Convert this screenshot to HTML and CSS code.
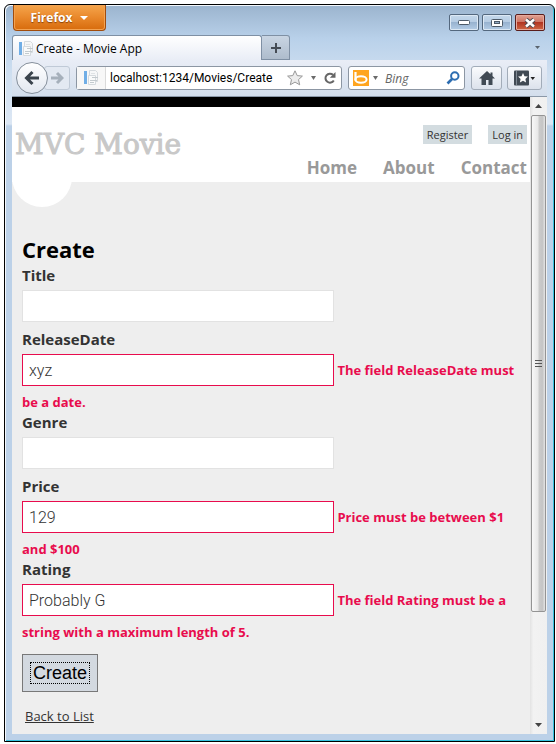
FILE: index.html
```html
<!DOCTYPE html>
<html lang="en">
<head>
<meta charset="utf-8">
<title>Create - Movie App</title>
<link rel="stylesheet" href="styles.css">
</head>
<body>
<svg class="defs" width="0" height="0" aria-hidden="true">
  <symbol id="doc" viewBox="0 0 16 16">
    <rect x="1" y="1" width="3" height="13" fill="#70aee6"/>
    <path d="M6.500 .5h6l2 2v9h-8z" fill="#f6f7f8" stroke="#d5dade"/>
    <path d="M5.500 5.500h7v9h-7z" fill="#f9fafa" stroke="#d5dade"/>
    <path d="M9 7.500h6M7 10.500h7M7 12.500h4" stroke="#c3cace"/>
    <path d="M8 3.500h4" stroke="#dfe3e5"/>
  </symbol>
</svg>
<div class="window">
  <header class="titlebar">
    <button class="app-menu" type="button">Firefox
      <svg width="8" height="4" viewBox="0 0 8 4" aria-hidden="true"><path d="M0 0h8L4 4z" fill="#fff"/></svg>
    </button>
    <div class="window-controls">
      <button class="control" type="button" aria-label="Minimize"><svg width="12" height="6" viewBox="0 0 12 6"><rect x=".5" y=".5" width="11" height="4" rx="1" fill="#fff" stroke="#4d5a68"/></svg></button>
      <button class="control" type="button" aria-label="Maximize"><svg width="12" height="8" viewBox="0 0 12 8"><rect x=".5" y=".5" width="11" height="7" rx="1" fill="#fff" stroke="#4d5a68"/><rect x="3.500" y="2.500" width="5" height="2" fill="#8fa9c4" stroke="#4d5a68"/></svg></button>
      <button class="control close" type="button" aria-label="Close"><svg width="12" height="10" viewBox="0 0 12 10"><path d="M2 1.500l8 7M10 1.500l-8 7" stroke="#4f4a52" stroke-width="4.500"/><path d="M2 1.500l8 7M10 1.500l-8 7" stroke="#fff" stroke-width="2.500"/></svg></button>
    </div>
  </header>
  <div class="chrome">
    <div class="tabs">
      <div class="tab"><svg width="16" height="16" aria-hidden="true"><use href="#doc"/></svg><span>Create - Movie App</span></div>
      <button class="new-tab" type="button" aria-label="New tab"><svg width="10" height="10" viewBox="0 0 10 10"><path d="M5 0v10M0 5h10" stroke="#454c55" stroke-width="2"/></svg></button>
      <button class="tab-list" type="button" aria-label="List all tabs"><svg width="5" height="3" viewBox="0 0 5 3"><path d="M0 0h5L2.500 3z" fill="#59636d"/></svg></button>
    </div>
    <div class="navbar">
      <button class="back" type="button" aria-label="Back"><svg width="16" height="16" viewBox="0 0 16 16"><path d="M8.500 2L2.500 8l6 6M3 8h12" fill="none" stroke="#3b444d" stroke-width="3"/></svg></button>
      <button class="forward" type="button" aria-label="Forward"><svg width="14" height="14" viewBox="0 0 14 14"><path d="M7 2l5 5-5 5M1 7h10" fill="none" stroke="#a6b0bb" stroke-width="3"/></svg></button>
      <div class="address">
        <span class="site"><svg width="16" height="16" aria-hidden="true"><use href="#doc"/></svg></span>
        <input type="text" aria-label="Address" value="localhost:1234/Movies/Create">
        <svg width="16" height="16" viewBox="0 0 16 16" aria-hidden="true"><path d="M8 .8l2.200 4.800 5.200.5-3.900 3.500 1.200 5.200L8 12.100l-4.700 2.700 1.200-5.200L.6 6.100l5.200-.5z" fill="#ececec" stroke="#989898"/></svg>
        <svg width="5" height="4" viewBox="0 0 5 4" aria-hidden="true"><path d="M0 0h5L2.500 4z" fill="#6b6b6b"/></svg>
        <svg width="12" height="12" viewBox="0 0 12 12" aria-hidden="true"><path d="M9.800 8.500a4.500 4.500 0 1 1-.8-5.700" fill="none" stroke="#666" stroke-width="2"/><path d="M11.500 0v5.800H5.800z" fill="#666"/></svg>
      </div>
      <div class="search">
        <svg width="16" height="16" viewBox="0 0 16 16" aria-hidden="true"><rect width="16" height="16" fill="#ffa51f"/><path d="M2.500 2v8.500" stroke="#fff" stroke-width="2.200"/><ellipse cx="8" cy="9.500" rx="5.600" ry="3.200" fill="none" stroke="#fff" stroke-width="2"/></svg>
        <svg width="5" height="4" viewBox="0 0 5 4" aria-hidden="true"><path d="M0 0h5L2.500 4z" fill="#6b6b6b"/></svg>
        <input type="text" aria-label="Search" placeholder="Bing">
        <svg width="14" height="14" viewBox="0 0 14 14" aria-hidden="true"><circle cx="8.800" cy="5" r="3.700" fill="#fff" stroke="#2d6db1" stroke-width="2"/><path d="M6 8L1.500 12.500" stroke="#2d6db1" stroke-width="2.600"/></svg>
      </div>
      <button class="tool" type="button" aria-label="Home"><svg width="16" height="14" viewBox="0 0 16 14"><path d="M8 0L0 7.500h2.500V14H7V9h2.500v5h4V7.500H16l-2.500-2.400V1.500h-2v1.800z" fill="#414a54"/></svg></button>
      <button class="tool wide" type="button" aria-label="Bookmarks"><svg width="21" height="16" viewBox="0 0 21 16"><rect width="15" height="15" y=".5" rx="1" fill="#414a54"/><path d="M2.500 1v14" stroke="#7f8994"/><path d="M9 3l1.500 3.200 3.400.4-2.500 2.300.7 3.500L9 10.700l-3.100 1.700.7-3.500-2.500-2.300 3.400-.4z" fill="#fff"/><path d="M16.500 7h4.500l-2.250 3z" fill="#222"/></svg></button>
    </div>
  </div>
  <div class="viewport">
    <div class="page">
      <header class="site-header">
        <a class="logo" href="#">MVC Movie</a>
        <div class="links">
          <nav class="account"><a href="#">Register</a><a href="#">Log in</a></nav>
          <nav class="menu"><a href="#">Home</a><a href="#">About</a><a href="#">Contact</a></nav>
        </div>
      </header>
      <main>
        <h2>Create</h2>
        <form>
          <label for="title">Title</label>
          <div class="editor"><input id="title" type="text"></div>
          <label for="release">ReleaseDate</label>
          <div class="editor"><input class="invalid" id="release" type="text" value="xyz" aria-describedby="release-error"> <span class="error" id="release-error">The field ReleaseDate must be a date.</span></div>
          <label for="genre">Genre</label>
          <div class="editor"><input id="genre" type="text"></div>
          <label for="price">Price</label>
          <div class="editor"><input class="invalid" id="price" type="text" value="129" aria-describedby="price-error"> <span class="error" id="price-error">Price must be between $1 and $100</span></div>
          <label for="rating">Rating</label>
          <div class="editor"><input class="invalid" id="rating" type="text" value="Probably G" aria-describedby="rating-error"> <span class="error" id="rating-error">The field Rating must be a string with a maximum length of 5.</span></div>
          <button class="submit" type="submit"><span>Create</span></button>
        </form>
        <a class="return" href="#">Back to List</a>
      </main>
    </div>
    <div class="scrollbar" aria-hidden="true">
      <svg class="arrow" width="7" height="4" viewBox="0 0 7 4"><path d="M0 4h7L3.500 0z" fill="#444"/></svg>
      <div class="thumb"><i></i><i></i><i></i></div>
      <div class="track"></div>
      <svg class="arrow" width="7" height="4" viewBox="0 0 7 4"><path d="M0 0h7L3.500 4z" fill="#444"/></svg>
    </div>
  </div>
</div>
</body>
</html>
```
FILE: styles.css
```css
* { box-sizing: border-box; }

body {
  margin: 0;
  padding: 4px 1px 3px 4px;
  background: #fff;
  font-family: "Open Sans", "Noto Sans", sans-serif;
  color: #333;
}

button, input { font-family: inherit; margin: 0; padding: 0; }
a { color: inherit; text-decoration: none; }
svg { display: block; flex: none; }
.defs { position: absolute; }

.window {
  display: flex;
  flex-direction: column;
  min-height: calc(100vh - 7px);
  padding: 0 7px 7px;
  border: 1px solid #000;
  border-radius: 6px 6px 0 0;
  background: linear-gradient(#9bb4ce, #b9d1ea 34px, #cfdff0 70px, #dce7f4 119px, #bcd1e8 121px);
  box-shadow: inset 1px 1px #f4f8fc, inset -1px -1px #35c3df;
}

/* Title bar */
.titlebar {
  display: flex;
  justify-content: space-between;
  align-items: flex-start;
  height: 30px;
}
.app-menu {
  display: flex;
  justify-content: center;
  align-items: center;
  gap: 8px;
  width: 93px;
  height: 26px;
  margin-left: 1px;
  border: 1px solid #a14c0c;
  border-top: 0;
  border-radius: 0 0 4px 4px;
  background: linear-gradient(#f5a54c, #e9882b 50%, #d76b0c);
  box-shadow: inset 0 0 0 1px #f2a352;
  color: #fff;
  font-size: 12px;
  font-weight: 700;
  text-shadow: 0 1px 1px #8b4208;
}
.window-controls { display: flex; gap: 3px; padding: 9px 2px 0 0; }
.control {
  display: flex;
  align-items: center;
  justify-content: center;
  width: 30px;
  height: 17px;
  border: 1px solid #54687e;
  border-radius: 2px;
  background: linear-gradient(#c5d8eb, #b6cce3 48%, #98b3d0 50%, #b4cde6);
  box-shadow: inset 0 0 0 1px #dce8f4;
}
.close {
  border-color: #5a1d1b;
  background: linear-gradient(#e0a192, #cf7362 48%, #b13522 50%, #cf6744);
  box-shadow: inset 0 0 0 1px #e7a99c;
}

/* Tabs and toolbar */
.tabs { display: flex; height: 25px; }
.tab {
  display: flex;
  align-items: center;
  gap: 2px;
  width: 250px;
  padding: 1px 5px 0;
  border: 1px solid #7f90a4;
  border-bottom: 0;
  border-radius: 3px 3px 0 0;
  background: linear-gradient(#fff, #e9edf6);
  color: #000;
  font-size: 12px;
}
.new-tab {
  display: flex;
  align-items: center;
  justify-content: center;
  width: 28px;
  border: 1px solid #7f90a4;
  border-left: 0;
  border-radius: 0 3px 0 0;
  background: linear-gradient(#c9d5e3, #aebccc);
}
.tab-list { margin-left: auto; padding: 0 7px; border: 0; background: none; }
.navbar {
  display: flex;
  align-items: center;
  height: 37px;
  padding: 0 5px 0 4px;
  border-bottom: 1px solid #8b98a8;
  background: linear-gradient(#e9edf6, #d3deec);
}
.back, .forward, .tool {
  display: flex;
  align-items: center;
  justify-content: center;
  flex: none;
  height: 24px;
  border: 1px solid #a2acb9;
  border-radius: 3px;
  background: linear-gradient(#fafbfd, #dce2ec);
}
.back {
  z-index: 1;
  width: 32px;
  height: 32px;
  border-color: #858f9b;
  border-radius: 50%;
  background: linear-gradient(#fff, #e3e8f0);
}
.forward {
  width: 26px;
  margin: 0 6px 0 -4px;
  border-color: #c0cad7;
  background: #e3e9f2;
}
.tool { width: 31px; }
.tool.wide { width: 35px; margin-left: 5px; }
.address, .search {
  display: flex;
  align-items: center;
  height: 24px;
  border: 1px solid #8c96a3;
  border-radius: 3px;
  background: #fff;
}
.address { flex: 1; gap: 8px; min-width: 0; padding-right: 5px; }
.site {
  display: flex;
  align-items: center;
  align-self: stretch;
  padding: 0 6px;
  border-right: 1px solid #dadada;
  background: #f7f7f7;
}
.address input, .search input {
  flex: 1;
  min-width: 0;
  border: 0;
  outline: 0;
  background: none;
  color: #000;
  font-size: 12px;
}
.address input { margin-left: -4px; font-family: Roboto, sans-serif; }
.search { gap: 4px; width: 117px; margin: 0 6px; padding: 0 4px; }
.search input { margin-left: 3px; }
.search input::placeholder { color: #666; font-style: italic; opacity: 1; }

/* Web page */
.viewport { display: flex; flex: 1; background: #eee; }
.page { flex: 1; min-width: 0; border-top: 10px solid #000; }
.site-header {
  position: relative;
  display: flex;
  justify-content: space-between;
  height: 75px;
  padding: 0 3px;
  background: #fff;
}
.site-header::after {
  content: "";
  position: absolute;
  left: 0;
  bottom: -25px;
  width: 60px;
  height: 60px;
  border-radius: 50%;
  background: #fff;
}
.logo {
  z-index: 1;
  padding-top: 20px;
  color: #c8c8c8;
  font: 28px/36px "DejaVu Serif", serif;
  -webkit-text-stroke: 1px #c8c8c8;
}
.account { display: flex; justify-content: flex-end; gap: 16px; padding-top: 18px; }
.account a {
  padding: 0 4px;
  background: #d3dce0;
  font-size: 11px;
  line-height: 19px;
}
.menu {
  display: flex;
  justify-content: flex-end;
  gap: 26px;
  padding-top: 12px;
  color: #999;
  font-size: 17px;
  font-weight: 700;
  line-height: 24px;
}

main { padding: 51px 10px 8px; }
h2 { margin: 0; color: #000; font-size: 22px; line-height: 32px; }
label { display: block; width: max-content; font-size: 15px; font-weight: 700; line-height: 20px; }
.editor { min-height: 44px; padding-top: 2px; font-size: 13px; line-height: 19px; }
.editor input {
  width: 312px;
  height: 32px;
  margin: 3px 0 7px;
  padding: 0 6px;
  border: 1px solid #e2e2e2;
  background: #fff;
  color: #333;
  font-family: Roboto, sans-serif;
  font-size: 16px;
  font-weight: 300;
  vertical-align: middle;
}
.editor .invalid { border-color: #e80c4d; }
.error { color: #e80c4d; font-weight: 700; }
.submit {
  display: block;
  margin-top: 12px;
  padding: 7px;
  border: 1px solid #787878;
  background: #d3d9e0;
  color: #000;
  font: 18px/20px "Liberation Sans", sans-serif;
}
.submit span { display: block; padding: 0 2px; border: 1px dotted #000; }
.return {
  display: inline-block;
  margin: 14px 3px 0;
  font-size: 13px;
  line-height: 20px;
  text-decoration: underline;
}

/* Scroll bar */
.scrollbar {
  display: flex;
  flex-direction: column;
  align-items: center;
  width: 17px;
  background: linear-gradient(90deg, #e3e3e3, #f2f2f2 20%, #f0f0f0);
}
.arrow { margin: 7px 0; }
.thumb {
  display: flex;
  flex: 497;
  flex-direction: column;
  align-items: center;
  justify-content: center;
  gap: 2px;
  width: 15px;
  border: 1px solid #949494;
  border-radius: 2px;
  background: linear-gradient(90deg, #f8f8f8, #e8e8e8 45%, #cbcbcb 55%, #c5c5c5 80%, #e4e4e4);
}
.thumb i { width: 7px; height: 1px; background: #555; }
.track { flex: 104; }
```
